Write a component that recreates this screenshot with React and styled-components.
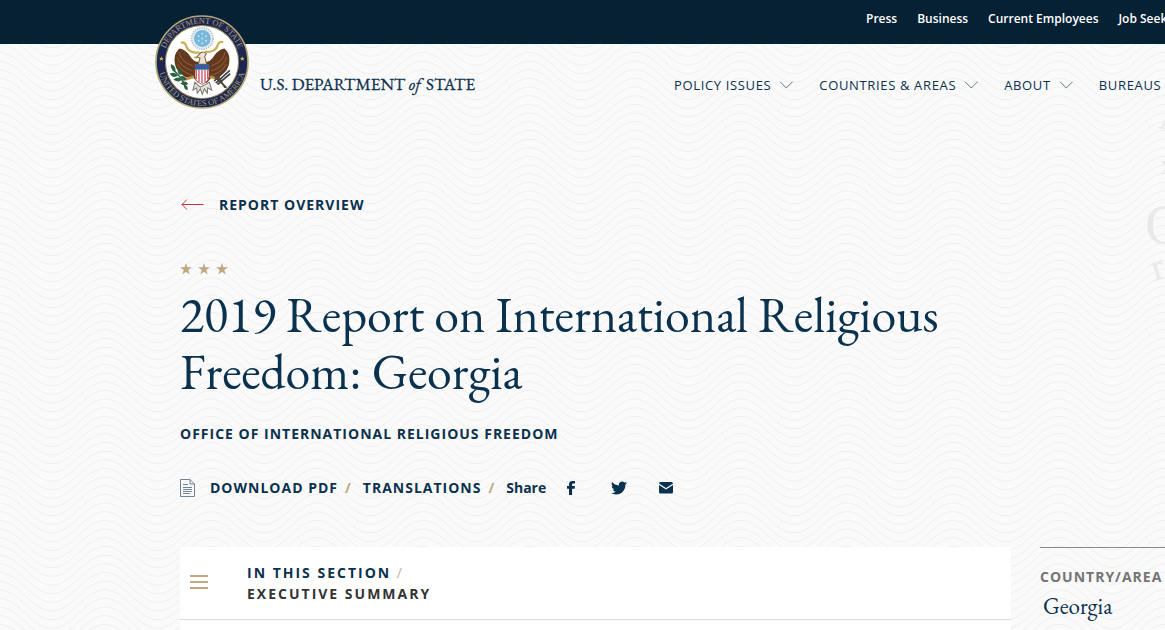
import React from "react";
import styled, { createGlobalStyle, css } from "styled-components";

const navy = "#0a314d";
const ink = "#062034";
const gold = "#c1a783";
const sans = '"Open Sans", "Noto Sans", sans-serif';
const serif = '"EB Garamond", "Liberation Serif", serif';

const waveLines = Array.from({ length: 10 }, (_, i) => {
  const y = (i * 26) / 3 - 43;
  const low = (y + 30).toFixed(2);
  const top = y.toFixed(2);
  return `M-53 ${low}C-33 ${low} -20 ${top} 0 ${top}S33 ${low} 53 ${low}S86 ${top} 106 ${top}S139 ${low} 159 ${low}`;
}).join("");
const waves = `url("data:image/svg+xml,${encodeURIComponent(
  `<svg xmlns='http://www.w3.org/2000/svg' width='106' height='26'><path d='${waveLines}' fill='none' stroke='#efefef'/></svg>`
)}")`;

const GlobalStyle = createGlobalStyle`
  *, *::before, *::after { box-sizing: border-box; }
  body { margin: 0; background: #fafafa; font-family: ${sans}; color: ${navy}; }
  h1, h2, p, ul, dl, dd { margin: 0; padding: 0; }
  ul { list-style: none; }
  a { color: inherit; text-decoration: none; }
  button { border: 0; padding: 0; background: none; color: inherit; font: inherit; letter-spacing: inherit; text-align: left; cursor: pointer; }
  svg { display: block; flex: none; }
`;

const Page = styled.div`
  position: relative;
  display: flex;
  flex-direction: column;
  min-height: 100vh;
  overflow: hidden;
  background: #fafafa ${waves} -1px 0;
`;

const Watermark = styled.svg`
  position: absolute;
  top: 96px;
  right: 0;
  pointer-events: none;
`;

const UtilityBar = styled.nav`
  display: flex;
  justify-content: flex-end;
  height: 44px;
  background: ${ink};
  color: #fff;
`;

const UtilityList = styled.ul`
  display: flex;
  gap: 20px;
  width: 299px;
  padding-top: 9px;
  font-size: 12px;
  line-height: 20px;
  font-weight: 600;
  white-space: nowrap;
`;

const Header = styled.header`
  display: flex;
  align-items: flex-start;
  padding-left: 155px;
`;

const Brand = styled.a`
  display: flex;
  align-items: flex-end;
  gap: 11px;
  margin-top: -29px;
  position: relative;
`;

const BrandName = styled.span`
  padding-bottom: 14px;
  font-family: ${serif};
  font-size: 17px;
  line-height: 22px;
  white-space: nowrap;
  -webkit-text-stroke: 0.3px ${navy};

  em {
    margin-right: 2px;
  }
`;

const MainNav = styled.ul`
  display: flex;
  gap: 25px;
  flex: none;
  width: 491px;
  margin-left: auto;
  padding-top: 31px;
  font-size: 13px;
  line-height: 20px;
  letter-spacing: 0.05em;
  white-space: nowrap;
`;

const NavButton = styled.button`
  display: flex;
  align-items: center;
  gap: 8px;
`;

const Intro = styled.section`
  padding: 85px 180px 0;
`;

const BackLink = styled.a`
  display: inline-flex;
  align-items: center;
  gap: 14px;
`;

const labelText = css`
  font-size: 14px;
  line-height: 20px;
  font-weight: 700;
  letter-spacing: 1px;
`;

const Label = styled.span`
  ${labelText}
  color: ${(p) => p.$color || navy};
`;

const Stars = styled.div`
  display: flex;
  gap: 6px;
  margin-top: 47px;
`;

const Title = styled.h1`
  max-width: 805px;
  margin-top: 11px;
  font-family: ${serif};
  font-size: 50px;
  line-height: 57px;
  font-weight: 400;
`;

const Office = styled.p`
  ${labelText}
  margin-top: 24px;
`;

const Actions = styled.div`
  display: flex;
  align-items: center;
  height: 20px;
  margin-top: 34px;
`;

const ActionLink = styled.a`
  ${labelText}
  display: flex;
  align-items: center;
  gap: 15px;
`;

const Slash = styled.span`
  ${labelText}
  color: ${gold};
  margin: 0 11px 0 7px;
`;

const Share = styled.span`
  font-size: 14px;
  line-height: 20px;
  font-weight: 700;
`;

const ShareLinks = styled.div`
  display: flex;
  align-items: center;
  gap: 32px;
  margin-left: 17px;
`;

const Columns = styled.div`
  display: grid;
  flex: 1 0 auto;
  grid-template-columns: minmax(0, 1fr) 125px;
  gap: 29px;
  margin-top: 49px;
  padding-left: 180px;
`;

const Article = styled.main`
  background: #fff;
`;

const SectionToggle = styled.button`
  display: flex;
  align-items: center;
  gap: 38px;
  width: 100%;
  height: 73px;
  padding-left: 10px;
  border-bottom: 1px solid #dcdcdc;
`;

const SectionText = styled.span`
  display: grid;
  font-size: 14px;
  line-height: 21px;
  font-weight: 700;
  letter-spacing: 2px;
`;

const Muted = styled.span`
  color: ${(p) => p.$color};
  font-weight: ${(p) => p.$weight || 700};
`;

const Aside = styled.aside`
  border-top: 1px solid #8a8a8a;
  padding-top: 17px;
`;

const Country = styled.dd`
  padding: 7px 0 0 3px;
  font-family: ${serif};
  font-size: 23px;
  line-height: 24px;
`;

const Chevron = () => (
  <svg width="15" height="8" viewBox="0 0 15 8" fill="none" stroke="#5f7688" aria-hidden="true">
    <path d="M1 .7 7.3 7 13.6 .7" />
  </svg>
);

const Star = () => (
  <svg width="12" height="12" viewBox="0 0 12 12" fill={gold}>
    <path d="M6 0 7.4 4.3H12L8.3 7 9.7 11.4 6 8.7 2.3 11.4 3.7 7 0 4.3H4.6Z" />
  </svg>
);

const Seal = () => (
  <svg width="94" height="94" viewBox="32 33 280 280" role="img" aria-label="Department of State seal">
    <defs>
      <path id="sealTop" d="M57 173a115 115 0 0 1 230 0" />
      <path id="sealBottom" d="M41 173a131 131 0 0 0 262 0" />
    </defs>
    <circle cx="172" cy="173" r="137" fill="#1c2650" stroke="#b5a878" strokeWidth="5" />
    <circle cx="172" cy="173" r="109" fill="#fff" stroke="#8f8558" strokeWidth="3" />
    <g fill="#a89d70" fontFamily="Liberation Serif, serif" fontSize="25" textAnchor="middle">
      <text><textPath href="#sealTop" startOffset="50%">DEPARTMENT OF STATE</textPath></text>
      <text><textPath href="#sealBottom" startOffset="50%">UNITED STATES OF AMERICA</textPath></text>
    </g>
    <g fill="#d8b955">
      <path d="m51 156 2 5h5l-4 3 2 5-5-3-5 3 2-5-4-3h5zM292 156l2 5h5l-4 3 2 5-5-3-5 3 2-5-4-3h5z" />
    </g>
    <circle cx="173" cy="103" r="32" fill="#e4edf1" stroke="#b9c2c2" strokeWidth="5" strokeDasharray="4 3" />
    <circle cx="173" cy="103" r="25" fill="#76b7da" />
    <g fill="#c4e2f1">
      <circle cx="173" cy="89" r="3" /><circle cx="162" cy="96" r="3" /><circle cx="184" cy="96" r="3" />
      <circle cx="173" cy="103" r="3" /><circle cx="162" cy="110" r="3" /><circle cx="184" cy="110" r="3" /><circle cx="173" cy="117" r="3" />
    </g>
    <path d="M109 116q12-4 16 9t18 18q12 4 22 1M235 114q-12-4-16 9t-18 18q-10 4-20 0" fill="none" stroke="#c8b158" strokeWidth="7" />
    <g fill="#62391f">
      <path d="M105 133c-12 11-17 25-14 43 3 20 17 34 34 43l29-2 4-43c-14-5-20-17-28-27-8-8-16-13-25-14Z" />
      <path d="M239 133c12 11 17 25 14 43-3 20-17 34-34 43l-29-2-4-43c14-5 20-17 28-27 8-8 16-13 25-14Z" />
      <path d="M146 172h54l2 45-15 18h-27l-16-18Z" />
    </g>
    <g fill="none" stroke="#8a5b33" strokeWidth="3">
      <path d="M103 143q5 29 42 42M98 158q8 29 46 42M99 178q11 25 46 35M241 143q-5 29-42 42M246 158q-8 29-46 42M245 178q-11 25-46 35" />
    </g>
    <path d="M163 151q10-14 22-3l-5 9 6 23h-25l5-19-10-3Z" fill="#e8e2d4" stroke="#81613d" strokeWidth="3" />
    <path d="m155 155-9 5 12 3" fill="#d4a42f" />
    <path d="M151 181h42v34q0 16-21 25-21-9-21-25Z" fill="#fff" stroke="#884646" strokeWidth="2" />
    <path d="M155 197v27m8-27v36m9-36v40m9-40v36m8-36v27" stroke="#cc5664" strokeWidth="4" />
    <path d="M151 180h42v16h-42Z" fill="#315d9c" />
    <path d="M148 217l-35 10M196 217l31 8" stroke="#b9913b" strokeWidth="8" />
    <g fill="#286342">
      <path d="M79 179q17 6 14 24-15-5-14-24ZM76 208q16-8 24 7-17 7-24-7ZM100 193q15 5 11 19-14-2-11-19ZM87 226q12-13 25-1-8 12-25 1ZM108 215q14-3 18 11-15 4-18-11ZM108 237q12-12 23 1-10 11-23-1ZM119 239q13 4 10 18-14-4-10-18Z" />
      <path d="M84 195q22 16 39 51" fill="none" stroke="#286342" strokeWidth="4" />
    </g>
    <g stroke="#47443e" strokeWidth="5">
      <path d="m213 236 42-38M218 240l38-32M208 230l37-36M211 218l34 31M221 217l20 33" />
    </g>
    <path d="m151 233-6 24 11-7 2 16 9-13 6 16 6-16 9 13 1-16 12 7-7-24-14 8-13 7-8-7Z" fill="#e2e1db" stroke="#777469" strokeWidth="3" />
  </svg>
);

const utilityLinks = ["Press", "Business", "Current Employees", "Job Seekers"];
const navItems = ["POLICY ISSUES", "COUNTRIES & AREAS", "ABOUT", "BUREAUS"];

export default function App() {
  return (
    <Page>
      <GlobalStyle />
      <Watermark width="24" height="220" viewBox="0 0 24 220" fill="#e9e9e9" fontFamily="Liberation Serif, serif" aria-hidden="true">
        <text x="4" y="148" fontSize="56">C</text>
        <text transform="translate(14 185) rotate(-18)" fontSize="38">r</text>
        <text transform="translate(17 32) rotate(10)" fontSize="34">A</text>
        <text transform="translate(19 78)" fontSize="28">x</text>
      </Watermark>
      <UtilityBar aria-label="Utility">
        <UtilityList>
          {utilityLinks.map((t) => <li key={t}><a href="#">{t}</a></li>)}
        </UtilityList>
      </UtilityBar>
      <Header>
        <Brand href="#">
          <Seal />
          <BrandName>U.S. DEPARTMENT <em>of</em> STATE</BrandName>
        </Brand>
        <MainNav>
          {navItems.map((t) => <li key={t}><NavButton>{t}<Chevron /></NavButton></li>)}
        </MainNav>
      </Header>
      <Intro>
        <BackLink href="#">
          <svg width="25" height="12" viewBox="0 0 25 12" fill="none" stroke="#c8323f" aria-hidden="true">
            <path d="M23.500 5.500H2M7 .5 2 5.500 7 10.500" />
          </svg>
          <Label>REPORT OVERVIEW</Label>
        </BackLink>
        <Stars aria-hidden="true"><Star /><Star /><Star /></Stars>
        <Title>2019 Report on International Religious Freedom: Georgia</Title>
        <Office>OFFICE OF INTERNATIONAL RELIGIOUS FREEDOM</Office>
        <Actions>
          <ActionLink href="#">
            <svg width="15" height="18" viewBox="0 0 15 18" fill="none" stroke="#6f8494" aria-hidden="true">
              <path d="M.5.5H10L14.5 5V17.5H.5ZM10 .5V5H14.5M3 5.5H8M3 8.5H12M3 10.5H12M3 12.5H12M3 14.5H10" />
            </svg>
            DOWNLOAD PDF
          </ActionLink>
          <Slash>/</Slash>
          <ActionLink href="#">TRANSLATIONS</ActionLink>
          <Slash>/</Slash>
          <Share>Share</Share>
          <ShareLinks>
            <a href="#" aria-label="Facebook">
              <svg width="16" height="16" viewBox="0 0 16 16" fill={navy}>
                <path d="M6 15V8.800H4V6h2V4.300C6 2.200 7.200 1 9.300 1H12v2.600h-1.600C9.500 3.600 9.100 4 9.100 4.800V6H12l-.4 2.800H9.100V15Z" />
              </svg>
            </a>
            <a href="#" aria-label="Twitter">
              <svg width="16" height="16" viewBox="0 0 24 24" fill={navy}>
                <path d="M23.950 4.570a10 10 0 0 1-2.820.770 4.960 4.960 0 0 0 2.160-2.720c-.950.550-2 .960-3.130 1.180a4.920 4.920 0 0 0-8.380 4.480C7.690 8.100 4.070 6.130 1.640 3.160a4.820 4.820 0 0 0-.670 2.480c0 1.710.870 3.210 2.190 4.100a4.900 4.900 0 0 1-2.230-.620v.060a4.920 4.920 0 0 0 3.950 4.830 5 5 0 0 1-2.210.080 4.940 4.940 0 0 0 4.600 3.420A9.870 9.870 0 0 1 0 19.540a13.990 13.990 0 0 0 7.550 2.210c9.050 0 14-7.500 14-13.980 0-.210 0-.420-.020-.630a9.940 9.940 0 0 0 2.460-2.550Z" />
              </svg>
            </a>
            <a href="#" aria-label="Email">
              <svg width="14" height="16" viewBox="0 0 14 16" fill={navy}>
                <path d="M1.500 2h11A1.500 1.500 0 0 1 14 3.500L7 8 0 3.500A1.500 1.500 0 0 1 1.500 2ZM0 5l7 4.500L14 5v7a1.500 1.500 0 0 1-1.500 1.500h-11A1.500 1.500 0 0 1 0 12Z" />
              </svg>
            </a>
          </ShareLinks>
        </Actions>
      </Intro>
      <Columns>
        <Article>
          <SectionToggle aria-expanded="false">
            <svg width="19" height="16" viewBox="0 0 19 16" stroke={gold} strokeWidth="2" aria-hidden="true">
              <path d="M0 1H18M0 7H18M0 13H18" />
            </svg>
            <SectionText>
              <span>IN THIS SECTION <Muted $color="#b9b0a3" $weight={400}>/</Muted></span>
              <Muted $color="#333333">EXECUTIVE SUMMARY</Muted>
            </SectionText>
          </SectionToggle>
        </Article>
        <Aside>
          <dl>
            <dt><Label $color="#747474">COUNTRY/AREA</Label></dt>
            <Country>Georgia</Country>
          </dl>
        </Aside>
      </Columns>
    </Page>
  );
}
